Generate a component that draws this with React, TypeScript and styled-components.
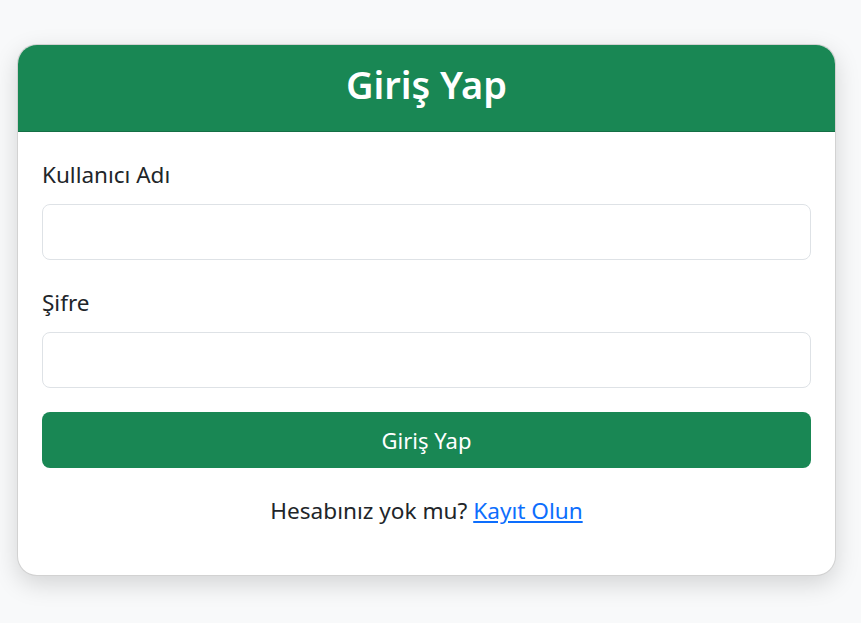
import React from "react";
import styled, { createGlobalStyle } from "styled-components";

const GlobalStyle = createGlobalStyle`
  * { box-sizing: border-box; }
  html, body { margin: 0; padding: 0; }
  body {
    background: #f8f9fa;
    font-family: "Noto Sans", "Open Sans", sans-serif;
    color: #212529;
  }
`;

const Page = styled.div`
  padding: 44px 0 0 17px;
  min-height: 623px;
`;

const Card = styled.div`
  width: 819px;
  background: #fff;
  border: 1px solid rgba(0, 0, 0, 0.175);
  border-radius: 20px;
  overflow: hidden;
  box-shadow: 0 8px 24px rgba(0, 0, 0, 0.15);
`;

const Header = styled.div`
  background: #198754;
  border-bottom: 1px solid rgba(0, 0, 0, 0.175);
  padding: 13px 16px 21px;
  text-align: center;
`;

const Title = styled.h1`
  margin: 0;
  color: #fff;
  font-size: 38px;
  font-weight: 600;
  line-height: 52px;
`;

const Body = styled.form`
  padding: 26px 24px 47px;
  display: flex;
  flex-direction: column;
`;

const Field = styled.div`
  display: flex;
  flex-direction: column;
  margin-bottom: 26px;

  & + button {
    margin-top: -2px;
  }
`;

const Label = styled.label`
  font-size: 22.5px;
  line-height: 34px;
  margin-bottom: 12px;
`;

const Input = styled.input`
  height: 56px;
  width: 100%;
  border: 1px solid #dee2e6;
  border-radius: 8px;
  padding: 0 16px;
  font-size: 22px;
  font-family: inherit;
  background: #fff;
  outline: none;
`;

const Button = styled.button`
  height: 56px;
  width: 100%;
  border: none;
  border-radius: 8px;
  background: #198754;
  color: #fff;
  font-family: inherit;
  font-size: 22px;
  cursor: pointer;
`;

const Footer = styled.p`
  margin: 26px 0 0;
  text-align: center;
  font-size: 22.6px;
  line-height: 34px;
`;

const Link = styled.a`
  color: #0d6efd;
  text-decoration: underline;
`;

export default function App() {
  return (
    <>
      <GlobalStyle />
      <Page>
        <Card>
          <Header>
            <Title>Giriş Yap</Title>
          </Header>
          <Body onSubmit={(e) => e.preventDefault()}>
            <Field>
              <Label htmlFor="username">Kullanıcı Adı</Label>
              <Input id="username" type="text" />
            </Field>
            <Field>
              <Label htmlFor="password">Şifre</Label>
              <Input id="password" type="password" />
            </Field>
            <Button type="submit">Giriş Yap</Button>
            <Footer>
              Hesabınız yok mu? <Link href="#">Kayıt Olun</Link>
            </Footer>
          </Body>
        </Card>
      </Page>
    </>
  );
}
